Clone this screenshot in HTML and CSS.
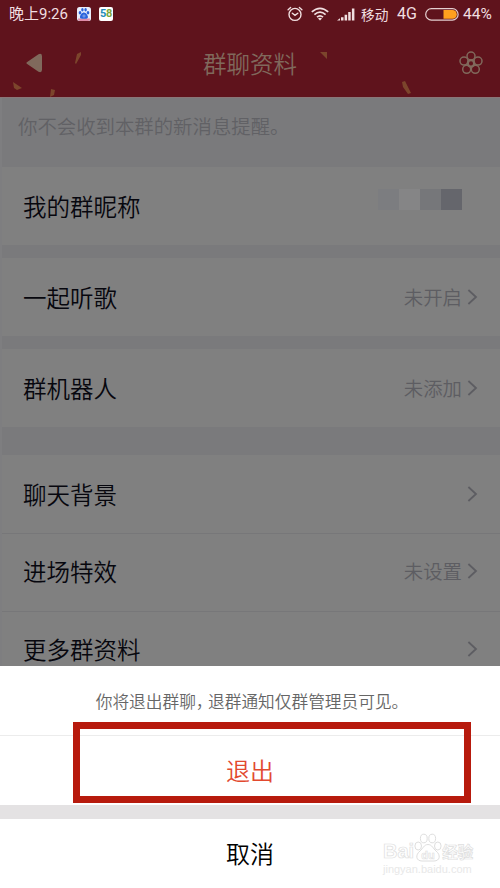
FILE: index.html
```html
<!DOCTYPE html>
<html lang="zh-CN">
  <head>
    <meta charset="UTF-8" />
    <meta name="viewport" content="width=device-width, initial-scale=1.0" />
    <title>群聊资料</title>
    <link rel="stylesheet" href="styles.css">
  </head>
  <body>
    <div class="phone">
      <header class="header">
        <svg class="confetti" width="500" height="97" viewBox="0 0 500 97">
          <path d="M75 63l2-9 4-2v3l-5 9zM13 82l9 6-5 2-3-2zM51 89l4 1-1 5-4 2zM320 52h7v7zM402 82l3-1 6 12-3 1-5-7z" />
        </svg>
        <div class="status-bar">
          <span class="time">晚上9:26</span>
          <svg class="app-icon" width="14" height="14" viewBox="0 0 14 14">
            <rect width="14" height="14" rx="2.5" fill="#e9eefb" />
            <path d="M1 11.500h12v.5q0 2-2 2H3q-2 0-2-2z" fill="#df8ca8" />
            <g fill="#2a62dc">
              <ellipse cx="3" cy="5.8" rx="1.3" ry="1.7" />
              <ellipse cx="5.4" cy="2.8" rx="1.2" ry="1.7" />
              <ellipse cx="8.6" cy="2.8" rx="1.2" ry="1.7" />
              <ellipse cx="11" cy="5.8" rx="1.3" ry="1.7" />
              <path d="M7 5.4c2 0 4 3 4 4.500S9 12 7 11.700 3 12 3 9.900 5 5.400 7 5.400z" />
            </g>
            <circle cx="7" cy="9" r="1.1" fill="none" stroke="#b9cbf5" stroke-width=".6" />
          </svg>
          <span class="app-58"><b class="five">5</b><b class="eight">8</b></span>
          <svg class="alarm" width="16" height="16" viewBox="0 0 16 16" fill="none" stroke="#f1dfe0" stroke-width="1.4" stroke-linecap="round">
            <circle cx="8" cy="8.4" r="6" />
            <path d="M1.1 3.7l2.5-2.3M14.9 3.7l-2.5-2.3M5.3 7.2L8 9.4l2.8-2.2" />
          </svg>
          <svg class="wifi" width="18" height="14" viewBox="0 0 18 14" fill="none" stroke="#f1dfe0" stroke-width="1.7">
            <path d="M.8 4.9q8.2-7.2 16.4 0M3.4 7.6q5.6-5 11.2 0M6 10.2q3-2.7 6 0" />
            <path d="M9 13.5l-2-2.1q2-1.5 4 0z" fill="#f1dfe0" stroke="none" />
          </svg>
          <svg class="signal" width="18" height="13" viewBox="0 0 18 13" fill="#f1dfe0">
            <path d="M0 12.5l3-2.3v2.3zM4 9.3h2.5v3.2H4zM7.6 6.8h2.5v5.7H7.6zM11.2 4h2.5v8.5h-2.5zM14.9.5h2.5v12h-2.5z" />
          </svg>
          <span class="carrier">移动</span>
          <span class="network">4G</span>
          <svg class="battery" width="34" height="13" viewBox="0 0 34 13">
            <rect x=".7" y=".7" width="32.4" height="11.4" rx="5.7" fill="none" stroke="#e4cfd0" stroke-width="1.2" />
            <path d="M18.5 2.1h9a4.3 4.3 0 0 1 0 8.6h-9z" fill="#ffa01e" />
          </svg>
          <span class="percent">44%</span>
        </div>
        <div class="nav">
          <svg class="back" width="17" height="20" viewBox="0 0 17 20">
            <path d="M1.2 9L12.5 1.2Q16 0 16 3.2v13.6q0 3.2-3.5 2L1.2 11.1q-1.6-1 0-2.1z" fill="#80695c" />
          </svg>
          <h1 class="title">群聊资料</h1>
          <svg class="flower" width="24" height="24" viewBox="0 0 24 24" fill="none" stroke="#80695c" stroke-width="1.5">
            <circle cx="12" cy="5" r="4" />
            <circle cx="19" cy="10.100" r="4" />
            <circle cx="16.300" cy="18.300" r="4" />
            <circle cx="7.700" cy="18.300" r="4" />
            <circle cx="5" cy="10.100" r="4" />
            <circle cx="12" cy="12.400" r="3.200" fill="#5f131c" stroke-width="2.300" />
          </svg>
        </div>
      </header>

      <main class="settings">
        <p class="note">你不会收到本群的新消息提醒。</p>
        <div class="row row-first">
          <span>我的群昵称</span>
          <span class="mosaic"><i class="m1"></i><i class="m2"></i><i class="m3"></i><i class="m4"></i></span>
        </div>
        <div class="row row-gap">
          <span>一起听歌</span>
          <span class="value">未开启</span>
          <svg class="arrow" width="11" height="16" viewBox="0 0 11 16"><path d="M1.4 1l7.6 7-7.6 7" /></svg>
        </div>
        <div class="row row-gap">
          <span>群机器人</span>
          <span class="value">未添加</span>
          <svg class="arrow" width="11" height="16" viewBox="0 0 11 16"><path d="M1.4 1l7.6 7-7.6 7" /></svg>
        </div>
        <div class="row row-gap-big">
          <span>聊天背景</span>
          <span class="value"></span>
          <svg class="arrow" width="11" height="16" viewBox="0 0 11 16"><path d="M1.4 1l7.6 7-7.6 7" /></svg>
        </div>
        <div class="row row-line">
          <span>进场特效</span>
          <span class="value">未设置</span>
          <svg class="arrow" width="11" height="16" viewBox="0 0 11 16"><path d="M1.4 1l7.6 7-7.6 7" /></svg>
        </div>
        <div class="row row-line">
          <span>更多群资料</span>
          <span class="value"></span>
          <svg class="arrow" width="11" height="16" viewBox="0 0 11 16"><path d="M1.4 1l7.6 7-7.6 7" /></svg>
        </div>
      </main>

      <section class="sheet">
        <p class="message">你将退出群聊<span class="comma">，</span>退群通知仅群管理员可见。</p>
        <div class="quit">退出
          <div class="highlight"></div>
        </div>
        <div class="cancel">取消</div>
        <div class="watermark">
          <div class="brand">
            <span>Bai</span>
            <svg width="28" height="30" viewBox="0 0 28 30" fill="#fff" stroke="#dedede">
              <ellipse cx="4.2" cy="13" rx="3.3" ry="4" />
              <ellipse cx="9.8" cy="5.5" rx="3.4" ry="4.3" />
              <ellipse cx="18.2" cy="5.5" rx="3.4" ry="4.3" />
              <ellipse cx="23.8" cy="13" rx="3.3" ry="4" />
              <path d="M14 11.5c4 0 5 4 8 6.5 5 4 4 10-2 10H8c-6 0-7-6-2-10 3-2.5 4-6.5 8-6.5z" />
              <text x="14" y="26" text-anchor="middle" class="du">du</text>
            </svg>
            <span class="jingyan">经验</span>
          </div>
          <div class="site">jingyan.baidu.com</div>
        </div>
      </section>
    </div>
  </body>
</html>
```
FILE: styles.css
```css
* {
  box-sizing: border-box;
}

body {
  margin: 0;
  font-family: "Noto Sans CJK SC", sans-serif;
  font-weight: 350;
}

h1,
p {
  margin: 0;
  font-weight: 350;
}

svg {
  display: block;
  flex-shrink: 0;
}

.phone {
  width: 500px;
  height: 888px;
  overflow: hidden;
  display: flex;
  flex-direction: column;
  background: #fff;
}

.header {
  position: relative;
  height: 98px;
  flex-shrink: 0;
  background: #5f131c;
  border-bottom: 1px solid #8a7678;
}

.confetti {
  position: absolute;
  top: 0;
  left: 0;
  fill: #7c452c;
}

.status-bar {
  display: flex;
  align-items: center;
  height: 28px;
  padding-left: 9px;
  color: #f1dfe0;
  font-size: 15px;
  font-weight: 400;
  line-height: 28px;
  white-space: nowrap;
}

.time {
  width: 67px;
  font-family: Roboto, "Noto Sans CJK SC", sans-serif;
  font-size: 15px;
}

.app-icon {
  margin-left: 1px;
}

.app-58 {
  width: 14px;
  height: 14px;
  margin-left: 8px;
  border-radius: 2px;
  background: #fff;
  font: 11px/14px Roboto, sans-serif;
  text-align: center;
  letter-spacing: -0.4px;
}

.five {
  color: #218bb9;
}

.eight {
  color: #7aa63c;
}

.alarm {
  margin-left: 174px;
}

.wifi {
  margin-left: 8px;
}

.signal {
  margin-left: 8px;
}

.carrier {
  width: 28px;
  margin-left: 6px;
  font-size: 13.7px;
  line-height: 26px;
}

.network {
  width: 22px;
  margin-left: 8px;
  font-family: Roboto, sans-serif;
  font-size: 16px;
}

.battery {
  margin-left: 6px;
}

.percent {
  margin-left: 4px;
  font-family: Roboto, sans-serif;
  font-size: 15.5px;
}

.nav {
  display: flex;
  align-items: center;
  justify-content: space-between;
  height: 70px;
  padding: 0 17px 0 26px;
}

.title {
  margin-left: -2px;
  color: #80695c;
  font-size: 23.5px;
  line-height: 34px;
}

.settings {
  height: 568px;
  flex-shrink: 0;
  overflow: hidden;
  background: #7a7a7c;
  border-left: 2px solid #7e7e80;
}

.note {
  height: 69px;
  padding: 13px 0 0 16px;
  color: #616165;
  font-size: 19.4px;
  line-height: 30px;
}

.row {
  display: flex;
  align-items: center;
  height: 78px;
  padding: 0 22px 0 21px;
  background: #808080;
  color: #07070e;
  font-size: 23.5px;
  line-height: 34px;
}

.row-first {
  padding-bottom: 1px;
}

.row-gap {
  margin-top: 13px;
}

.row-gap-big {
  margin-top: 28px;
}

.row-line {
  padding-bottom: 3px;
  border-top: 1px solid #777779;
}

.value {
  margin-left: auto;
  margin-right: 5px;
  color: #5d5d62;
  font-size: 19.4px;
}

.arrow {
  fill: none;
  stroke: #5d5d62;
  stroke-width: 1.8;
}

.mosaic {
  display: flex;
  margin: -12px 16px 0 auto;
}

.mosaic i {
  width: 21px;
  height: 21px;
}

.m1 {
  background: #7c7d80;
}

.m2 {
  background: #858586;
}

.m3 {
  background: #76777a;
}

.m4 {
  background: #65666c;
}

.sheet {
  position: relative;
  height: 222px;
  flex-shrink: 0;
  background: #fff;
}

.message {
  height: 70px;
  padding-left: 4px;
  border-bottom: 1px solid #ececec;
  color: #666;
  font-size: 16.7px;
  line-height: 70px;
  text-align: center;
  white-space: nowrap;
}

.comma {
  letter-spacing: -4.5px;
}

.quit,
.cancel {
  height: 69px;
  color: #e2492f;
  font-size: 24px;
  line-height: 68px;
  text-align: center;
}

.quit {
  position: relative;
}

.cancel {
  height: 83px;
  border-top: 14px solid #e4e2e3;
  color: #000;
}

.highlight {
  position: absolute;
  top: -14px;
  left: 73px;
  width: 398px;
  height: 81px;
  border: 7px solid #b71a0d;
}

.watermark {
  position: absolute;
  top: 167px;
  left: 383px;
  color: #fff;
  -webkit-text-stroke: 0.7px #dedede;
}

.brand {
  display: flex;
  align-items: flex-end;
  height: 30px;
  font: bold 20px/24px "Liberation Sans", sans-serif;
}

.du {
  font: bold 11px "Liberation Sans", sans-serif;
  stroke-width: 0.6px;
}

.jingyan {
  font: bold 15.5px/24px "Noto Sans CJK SC", sans-serif;
}

.site {
  color: #e8e8e8;
  font: 11px/12px "Liberation Sans", sans-serif;
  -webkit-text-stroke: 0;
}
```
